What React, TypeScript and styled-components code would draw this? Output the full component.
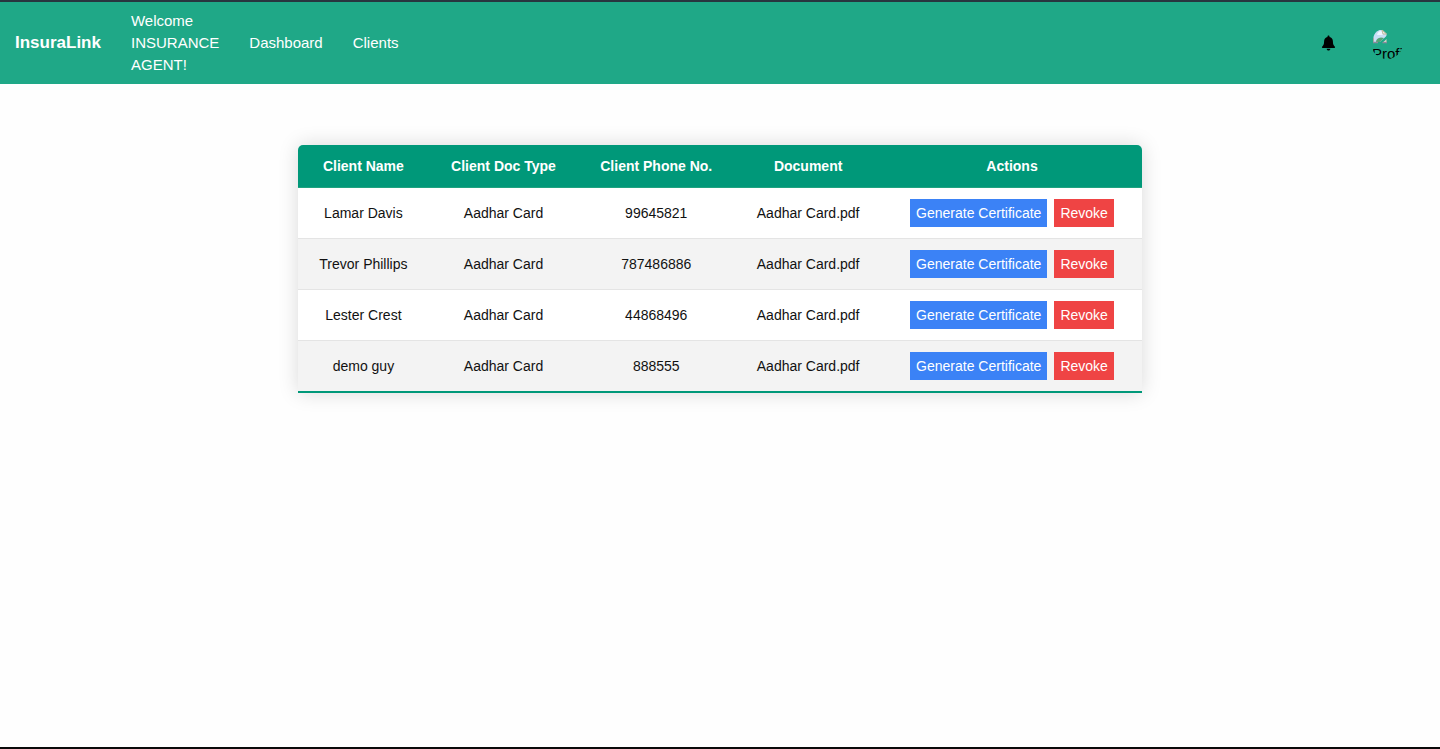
import React from "react";
import styled, { createGlobalStyle } from "styled-components";

const GlobalStyle = createGlobalStyle`
  *, *::before, *::after { box-sizing: border-box; }
  body {
    margin: 0;
    background: #fefefe;
    color: #111;
    font-family: Arial, "Liberation Sans", sans-serif;
    font-size: 15px;
    line-height: 22px;
  }
`;

const Page = styled.div`
  display: flex;
  flex-direction: column;
  min-height: 100vh;
  border-top: 2px solid #28353f;
  border-bottom: 2px solid #0a0a0a;
`;

const NavBar = styled.nav`
  display: flex;
  align-items: center;
  justify-content: space-between;
  padding: 8px 37px 8px 15px;
  background: #1fa887;
`;

const NavGroup = styled.div<{ $gap: number }>`
  display: flex;
  align-items: center;
  gap: ${(p) => p.$gap}px;
`;

const Brand = styled.a`
  color: #fff;
  font-size: 17px;
  font-weight: bold;
  text-decoration: none;
`;

const Greeting = styled.span`
  width: min-content;
  color: #fff;
`;

const NavLink = styled.a`
  color: #fff;
  text-decoration: none;
`;

const IconButton = styled.button`
  display: flex;
  padding: 0;
  border: 0;
  background: none;
  color: #000;
  cursor: pointer;
`;

const Avatar = styled.button`
  display: flex;
  flex-direction: column;
  align-items: flex-start;
  width: 32px;
  height: 32px;
  padding: 1px 0 0 1px;
  border: 0;
  border-radius: 50%;
  overflow: hidden;
  background: none;
  color: #000;
  font: inherit;
  line-height: 20px;
  cursor: pointer;

  svg { flex: none; }
`;

const Main = styled.main`
  flex: 1;
  padding: 61px 20px;
`;

const ClientTable = styled.table`
  width: 100%;
  max-width: 844px;
  margin: 0 auto;
  table-layout: fixed;
  border-spacing: 0;
  border-radius: 5px 5px 0 0;
  overflow: hidden;
  box-shadow: 0 0 20px rgba(0, 0, 0, 0.15);
  background: #fff;
  font-size: 14px;
  line-height: 20px;
  text-align: center;
`;

const HeadCell = styled.th<{ $share: number }>`
  width: ${(p) => p.$share}%;
  padding: 11px 0;
  background: #009879;
  border-bottom: 1px solid #1fa380;
  color: #fff;
`;

const Row = styled.tr`
  &:nth-child(even) { background: #f3f3f3; }
  &:last-child td { border-bottom: 2px solid #009879; }
`;

const Cell = styled.td`
  padding: 11px 0;
  border-bottom: 1px solid #e4e4e4;
`;

const Actions = styled.div`
  display: flex;
  justify-content: center;
  gap: 7px;
`;

const ActionButton = styled.button<{ $color: string }>`
  padding: 4px 6px;
  border: 0;
  background: ${(p) => p.$color};
  color: #fff;
  font: inherit;
  cursor: pointer;
`;

const columns = [
  { label: "Client Name", share: 15.5 },
  { label: "Client Doc Type", share: 17.7 },
  { label: "Client Phone No.", share: 18.5 },
  { label: "Document", share: 17.5 },
  { label: "Actions", share: 30.8 },
];

const clients = [
  { name: "Lamar Davis", phone: "99645821" },
  { name: "Trevor Phillips", phone: "787486886" },
  { name: "Lester Crest", phone: "44868496" },
  { name: "demo guy", phone: "888555" },
];

const BellIcon = () => (
  <svg width="15" height="16" viewBox="0 0 15 16" fill="currentColor" aria-hidden="true">
    <path d="M7.5 0.4c.6 0 1 .4 1 1v.5c2.1.5 3.4 2.2 3.4 4.4 0 3 .6 4.1 1.8 5.2.3.3.4.5.4.8 0 .4-.3.7-.8.7H1.7c-.5 0-.8-.3-.8-.7 0-.3.1-.5.4-.8 1.2-1.1 1.8-2.2 1.8-5.2 0-2.2 1.3-3.9 3.4-4.4v-.5c0-.6.4-1 1-1z" />
    <path d="M5.7 13.7h3.6c0 1-.8 1.800-1.800 1.800s-1.800-.8-1.800-1.800z" />
  </svg>
);

const MissingImageIcon = () => (
  <svg width="16" height="16" viewBox="0 0 16 16" aria-hidden="true">
    <path d="M1.500 14V9q1-5 6-7h3l4 4v3l-6 5z" fill="#c9def5" />
    <path d="M5 7q1-4 4-4 2 1 1.500 4z" fill="#eef6ff" />
    <path d="M4 14q0-4 5-4.500l3 .5-4 4z" fill="#56a474" />
    <path d="M1 14.500h5M10.500 14.500H15" fill="none" stroke="#8d8b9d" strokeWidth="1.500" />
    <path d="M1.500 13.500V10" stroke="#a9a7a0" strokeWidth="1" />
    <path d="M10 2l4.500 4H11z" fill="#eef3f5" stroke="#c2b998" strokeWidth="1" />
    <path d="M15.500 8l-7 6.500" stroke="#1fa887" strokeWidth="1.500" />
    <path d="M11.500 14l3-3v3z" fill="#d5d3c4" />
  </svg>
);

export default function App() {
  return (
    <>
      <GlobalStyle />
      <Page>
        <NavBar>
          <NavGroup $gap={30}>
            <Brand href="#">InsuraLink</Brand>
            <Greeting>Welcome INSURANCE AGENT!</Greeting>
            <NavLink href="#dashboard">Dashboard</NavLink>
            <NavLink href="#clients">Clients</NavLink>
          </NavGroup>
          <NavGroup $gap={35}>
            <IconButton type="button" aria-label="Notifications">
              <BellIcon />
            </IconButton>
            <Avatar type="button">
              <MissingImageIcon />
              <span>Profile</span>
            </Avatar>
          </NavGroup>
        </NavBar>
        <Main>
          <ClientTable>
            <thead>
              <tr>
                {columns.map((c) => (
                  <HeadCell key={c.label} scope="col" $share={c.share}>
                    {c.label}
                  </HeadCell>
                ))}
              </tr>
            </thead>
            <tbody>
              {clients.map((c) => (
                <Row key={c.name}>
                  <Cell>{c.name}</Cell>
                  <Cell>Aadhar Card</Cell>
                  <Cell>{c.phone}</Cell>
                  <Cell>Aadhar Card.pdf</Cell>
                  <Cell>
                    <Actions>
                      <ActionButton type="button" $color="#3b82f6">Generate Certificate</ActionButton>
                      <ActionButton type="button" $color="#ef4444">Revoke</ActionButton>
                    </Actions>
                  </Cell>
                </Row>
              ))}
            </tbody>
          </ClientTable>
        </Main>
      </Page>
    </>
  );
}
